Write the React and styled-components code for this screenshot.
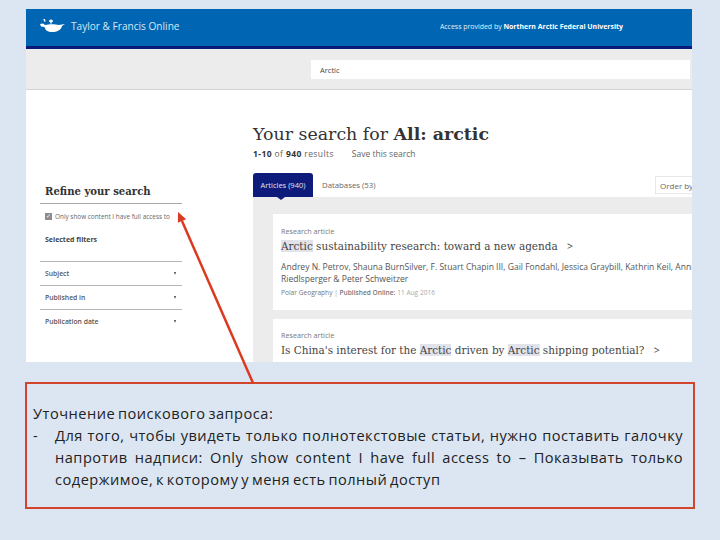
import React from "react";
import styled, { createGlobalStyle } from "styled-components";

const GlobalStyle = createGlobalStyle`
  html, body {
    margin: 0;
    padding: 0;
    background: #dce6f2;
  }
`;

const Slide = styled.div`
  position: relative;
  width: 720px;
  height: 540px;
  overflow: hidden;
  background: #dce6f2;
  padding: 9px 0 0 26px;
  box-sizing: border-box;
  font-family: "Open Sans", "Liberation Sans", sans-serif;
`;

const Shot = styled.div`
  width: 666px;
  height: 353px;
  background: #fff;
  overflow: hidden;
`;

const Header = styled.div`
  display: flex;
  justify-content: space-between;
  align-items: center;
  height: 40px;
  padding: 0 69px 3px 14px;
  box-sizing: border-box;
  background: #0066b3;
  border-bottom: 3px solid #0b1a78;
`;

const Brand = styled.div`
  display: flex;
  align-items: center;
  gap: 5px;
  color: #d5e8f5;
  font-size: 10.1px;
`;

const Access = styled.div`
  color: #e4f0f8;
  font-size: 6.95px;
  b {
    font-weight: 700;
    color: #fff;
  }
`;

const SearchBar = styled.div`
  display: flex;
  justify-content: flex-end;
  align-items: center;
  height: 41px;
  padding: 1px 2px 0 0;
  box-sizing: border-box;
  background: #ececec;
  border-bottom: 1px solid #d4d4d4;
`;

const SearchInput = styled.div`
  width: 379px;
  height: 19px;
  display: flex;
  align-items: center;
  padding-left: 9px;
  box-sizing: border-box;
  background: #fff;
  color: #444;
  font-size: 7.5px;
`;

const Body = styled.div`
  display: flex;
`;

const Sidebar = styled.aside`
  flex: none;
  width: 142px;
  margin-right: 71px;
  padding: 96px 0 0 14px;
`;

const RefineTitle = styled.div`
  font-family: "DejaVu Serif", serif;
  font-weight: 700;
  font-size: 10.1px;
  color: #333;
  padding: 0 0 6px 5px;
  border-bottom: 1px solid #aaa;
`;

const CheckRow = styled.div`
  display: flex;
  align-items: center;
  gap: 3px;
  margin: 8px 0 0 5px;
  font-size: 6.4px;
  color: #666;
  white-space: nowrap;
`;

const CheckBox = styled.span`
  display: inline-flex;
  width: 7px;
  height: 7px;
  background: #8d8d8d;
  color: #fff;
  font-size: 6px;
  line-height: 7px;
  align-items: center;
  justify-content: center;
`;

const SelectedTitle = styled.div`
  margin: 14px 0 17px 5px;
  font-size: 7px;
  font-weight: 700;
  color: #444;
`;

const FilterRow = styled.div`
  display: flex;
  justify-content: space-between;
  align-items: center;
  height: 24px;
  padding: 0 6px 0 5px;
  border-top: 1px solid #b5b5b5;
  box-sizing: border-box;
  font-size: 6.8px;
  font-weight: 600;
  color: #555;
  &::after {
    content: "";
    border-left: 1.5px solid transparent;
    border-right: 1.5px solid transparent;
    border-top: 3px solid #444;
  }
`;

const Main = styled.main`
  flex: 1;
  min-width: 0;
  padding-top: 31px;
`;

const Heading = styled.h1`
  margin: 0;
  font-family: "DejaVu Serif", serif;
  font-weight: 400;
  font-size: 17.4px;
  line-height: 26px;
  color: #333;
  white-space: nowrap;
  b {
    font-weight: 700;
  }
`;

const Counts = styled.div`
  display: flex;
  gap: 18px;
  margin-top: 1px;
  font-size: 8.5px;
  line-height: 12px;
  color: #666;
  b {
    color: #333;
  }
  span:first-child {
    letter-spacing: 0.4px;
  }
`;

const Tabs = styled.div`
  display: flex;
  align-items: center;
  margin-top: 13px;
  height: 24px;
`;

const ActiveTab = styled.div`
  position: relative;
  display: flex;
  align-items: center;
  justify-content: center;
  width: 60px;
  height: 24px;
  background: #0f1b7a;
  border-radius: 3px 3px 0 0;
  color: #dfe3f2;
  font-size: 7.5px;
  &::after {
    content: "";
    position: absolute;
    left: 24px;
    bottom: -3px;
    border-left: 4px solid transparent;
    border-right: 4px solid transparent;
    border-top: 3px solid #0f1b7a;
  }
`;

const Tab = styled.div`
  margin-left: 9px;
  color: #666;
  font-size: 7.8px;
`;

const OrderBy = styled.div`
  margin-left: auto;
  width: 37px;
  height: 18px;
  display: flex;
  align-items: center;
  padding-left: 4px;
  box-sizing: border-box;
  border: 1px solid #e8e8e8;
  border-right: 0;
  color: #666;
  font-size: 8px;
  white-space: nowrap;
  overflow: hidden;
`;

const Results = styled.div`
  display: flex;
  flex-direction: column;
  gap: 9px;
  padding: 17px 0 0 20px;
  background: #ececec;
  height: 200px;
`;

const Card = styled.div`
  background: #fff;
  padding: ${(p) => p.$top}px 0 0 8px;
  height: ${(p) => p.$height}px;
  flex: none;
  box-sizing: border-box;
  overflow: hidden;
`;

const Kind = styled.div`
  font-size: 7.2px;
  line-height: 10px;
  color: #777;
`;

const Title = styled.div`
  font-family: "DejaVu Serif", serif;
  font-size: 10.45px;
  line-height: 17px;
  margin-top: 1.5px;
  color: #444;
  white-space: nowrap;
  mark {
    background: #e2e2ea;
    color: #444;
  }
  span {
    margin-left: 6px;
    font-family: "Open Sans", sans-serif;
  }
`;

const Authors = styled.div`
  margin-top: 6.5px;
  font-size: 8.55px;
  line-height: 12px;
  color: #555;
  white-space: nowrap;
`;

const Source = styled.div`
  margin-top: 2.5px;
  font-size: 6.6px;
  line-height: 9px;
  color: #777;
  b {
    font-weight: 600;
  }
  i {
    font-style: normal;
    color: #aaa;
  }
`;

const Callout = styled.div`
  width: 670px;
  height: 127px;
  margin: 20px 0 0 -1px;
  padding: 18px 10px 0 6px;
  box-sizing: border-box;
  border: 2px solid #d0452b;
  font-size: 14.6px;
  letter-spacing: 0.5px;
  word-spacing: -1.5px;
  line-height: 22px;
  color: #222;
  text-align: justify;
`;

const Line = styled.div`
  display: flex;
`;

const Dash = styled.span`
  flex: none;
  width: 22px;
`;

const Arrow = styled.svg`
  position: absolute;
  left: 0;
  top: 0;
  pointer-events: none;
`;

const Logo = () => (
  <svg width="26" height="14" viewBox="0 0 26 14">
    <path d="M0 5 L3 4.5 L5 6 C9 5 15 5 19 6 L25 5 L22 7 C21 11 17 13 12 13 C8 13 5 11 4.5 8 L1 7.5 Z" fill="#fff" />
    <path d="M4 0 L5 2.5 M11 0.5 V4.5 M9 2 H13" stroke="#fff" strokeWidth="1.5" fill="none" />
  </svg>
);

export default function App() {
  return (
    <Slide>
      <GlobalStyle />
      <Shot>
        <Header>
          <Brand>
            <Logo />
            Taylor &amp; Francis Online
          </Brand>
          <Access>
            Access provided by <b>Northern Arctic Federal University</b>
          </Access>
        </Header>
        <SearchBar>
          <SearchInput>Arctic</SearchInput>
        </SearchBar>
        <Body>
          <Sidebar>
            <RefineTitle>Refine your search</RefineTitle>
            <CheckRow>
              <CheckBox>✓</CheckBox>
              Only show content I have full access to
            </CheckRow>
            <SelectedTitle>Selected filters</SelectedTitle>
            <FilterRow>Subject</FilterRow>
            <FilterRow>Published in</FilterRow>
            <FilterRow>Publication date</FilterRow>
          </Sidebar>
          <Main>
            <Heading>
              Your search for <b>All: arctic</b>
            </Heading>
            <Counts>
              <span>
                <b>1-10</b> of <b>940</b> results
              </span>
              <span>Save this search</span>
            </Counts>
            <Tabs>
              <ActiveTab>Articles (940)</ActiveTab>
              <Tab>Databases (53)</Tab>
              <OrderBy>Order by</OrderBy>
            </Tabs>
            <Results>
              <Card $height={96} $top={12}>
                <Kind>Research article</Kind>
                <Title>
                  <mark>Arctic</mark> sustainability research: toward a new agenda <span>&gt;</span>
                </Title>
                <Authors>
                  Andrey N. Petrov, Shauna BurnSilver, F. Stuart Chapin III, Gail Fondahl, Jessica Graybill, Kathrin Keil, Annika
                  <br />
                  Riedlsperger &amp; Peter Schweitzer
                </Authors>
                <Source>
                  Polar Geography <i>|</i> <b>Published Online:</b> <i>11 Aug 2016</i>
                </Source>
              </Card>
              <Card $height={60} $top={11}>
                <Kind>Research article</Kind>
                <Title>
                  Is China's interest for the <mark>Arctic</mark> driven by <mark>Arctic</mark> shipping potential? <span>&gt;</span>
                </Title>
              </Card>
            </Results>
          </Main>
        </Body>
      </Shot>
      <Callout>
        Уточнение поискового запроса:
        <Line>
          <Dash>-</Dash>
          <span>
            Для того, чтобы увидеть только полнотекстовые статьи, нужно поставить галочку напротив надписи: Only show content I have full access to – Показывать только содержимое, к которому у меня есть полный доступ
          </span>
        </Line>
      </Callout>
      <Arrow width="720" height="540" viewBox="0 0 720 540">
        <path d="M253 383 L182 221" stroke="#dc3a20" strokeWidth="2.5" fill="none" />
        <path d="M178 212 L186.1 219.2 L177.9 222.8 Z" fill="#dc3a20" />
      </Arrow>
    </Slide>
  );
}
